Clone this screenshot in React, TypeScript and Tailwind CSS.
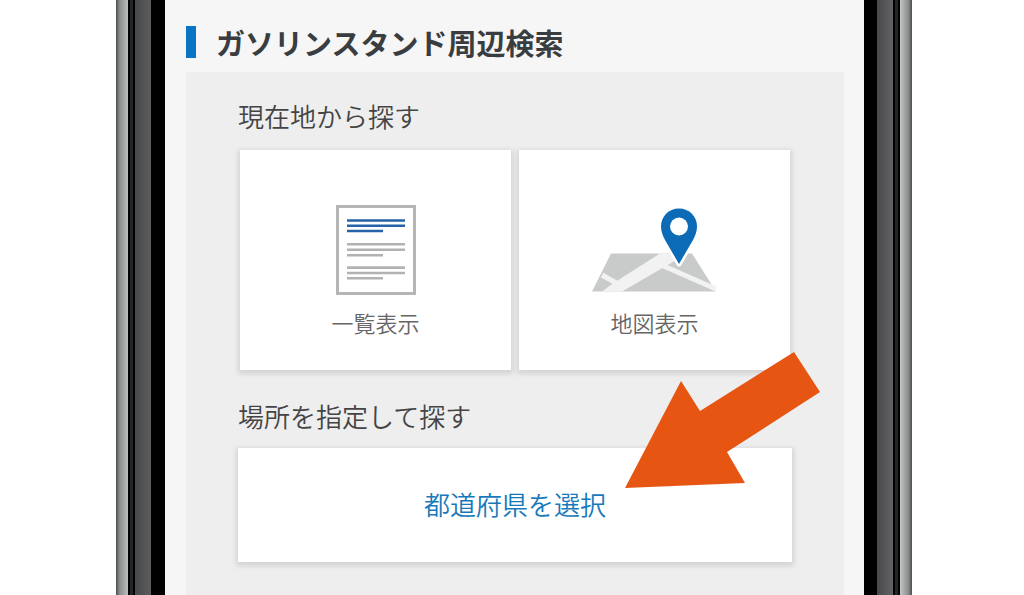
import type { ReactNode } from "react"

function ListIcon() {
  return (
    <svg viewBox="0 0 80 90" className="h-[90px] w-20" aria-hidden="true">
      <rect x="1.5" y="1.5" width="77" height="87" fill="#fff" stroke="#b5b5b6" strokeWidth="3" />
      <g stroke="#2562a8" strokeWidth="2.6">
        <path d="M11 15.5h58M11 20.8h58M11 26h36" />
      </g>
      <g stroke="#b2b2b3" strokeWidth="2.6">
        <path d="M11 39.3h58M11 44.8h58M11 50.2h36" />
        <path d="M11 62.6h58M11 68h58M11 73.3h36" />
      </g>
    </svg>
  )
}

function MapIcon() {
  return (
    <svg viewBox="2 0 126 88" className="h-[88px] w-[126px]" aria-hidden="true">
      <path d="M21 46.5H102L126 84.5H2Z" fill="#c9caca" />
      <path d="M70 46.5H94L83 55L32 84.5H12L22 77Z" fill="#f2f2f2" />
      <path d="M12 68L28 77M69 57L126 82" stroke="#f2f2f2" strokeWidth="5" fill="none" />
      <path
        d="M89 1.5C78.5 1.5 71 9.5 71 19.5C71 25 73 29 75 33L89 57L103 33C105 29 107 25 107 19.5C107 9.5 99.500 1.5 89 1.5Z"
        fill="#0b6bb6"
        stroke="#fff"
        strokeWidth="5"
        strokeLinejoin="round"
        paintOrder="stroke"
      />
      <circle cx="89" cy="19.5" r="9" fill="#fff" />
    </svg>
  )
}

function CardButton({ icon, label }: { icon: ReactNode; label: string }) {
  return (
    <button
      type="button"
      className="flex h-[220px] flex-col items-center justify-end bg-white pb-8 shadow-[0_2px_5px_2px_rgba(0,0,0,0.11)]"
    >
      {icon}
      <span className="mt-[11px] text-[22px] leading-8 font-[350] text-[#666]">{label}</span>
    </button>
  )
}

export default function App() {
  return (
    <div className="flex min-h-screen justify-center bg-white pl-1 font-['Noto_Sans_CJK_JP','Noto_Sans',sans-serif]">
      <div className="flex w-full max-w-[796px]">
        <div className="flex shrink-0">
          <div className="w-3 bg-linear-to-r from-[#4c4f4f] via-[#8b8d8d] via-30% to-[#bcbdbd]" />
          <div className="w-[7px] border-x-2 border-black bg-[#222629]" />
          <div className="w-4 bg-linear-to-r from-[#48494b] to-[#5c5c5e]" />
          <div className="w-3.5 bg-black" />
        </div>

        <main className="flex flex-1 flex-col bg-[#f6f6f6] pr-5 pl-[21px]">
          <div className="flex h-[72px] items-center gap-5 pt-3">
            <span className="h-8 w-2.5 bg-[#0a74c4]" />
            <h1 className="text-[29px] leading-8 font-bold text-[#3a3d40]">ガソリンスタンド周辺検索</h1>
          </div>

          <div className="flex-1 bg-[#eee] px-[52px] pt-[26px] pb-8">
            <section>
              <h2 className="text-[26px] leading-9 font-[350] text-[#444]">現在地から探す</h2>
              <div className="mt-4 grid grid-cols-2 gap-2 px-0.5">
                <CardButton icon={<ListIcon />} label="一覧表示" />
                <CardButton icon={<MapIcon />} label="地図表示" />
              </div>
            </section>

            <section className="mt-7">
              <h2 className="text-[26px] leading-9 font-[350] text-[#444]">場所を指定して探す</h2>
              <div className="relative mt-3.5">
                <button
                  type="button"
                  className="flex h-[114px] w-full items-center justify-center bg-white pb-1 text-[26px] font-[350] text-[#1779ba] shadow-[0_2px_5px_2px_rgba(0,0,0,0.11)]"
                >
                  都道府県を選択
                </button>
                <svg
                  viewBox="0 0 196 137"
                  className="pointer-events-none absolute -right-7 bottom-[74px] h-[137px] w-[196px]"
                  aria-hidden="true"
                >
                  <path d="M170 1L196 41L103 101L121 132L1 137L57 30L76 60Z" fill="#e75512" />
                </svg>
              </div>
            </section>
          </div>
        </main>

        <div className="flex shrink-0">
          <div className="w-[13px] bg-black" />
          <div className="w-4 bg-linear-to-r from-[#48494b] to-[#626264]" />
          <div className="w-[7px] border-x-2 border-black bg-[#222629]" />
          <div className="w-3 bg-linear-to-r from-[#c4c5c5] via-[#8b8d8d] via-70% to-[#4c4f4f]" />
        </div>
      </div>
    </div>
  )
}
